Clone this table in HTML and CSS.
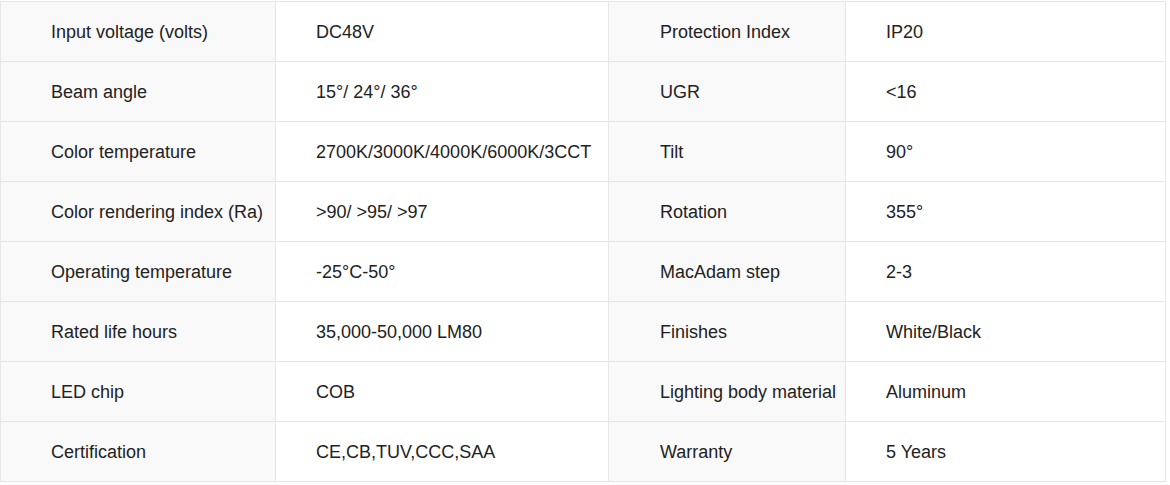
FILE: index.html
```html
<!DOCTYPE html>
<html>
<head>
<meta charset="utf-8">
<link rel="stylesheet" href="styles.css">
</head>
<body>
<div class="specs">
  <div class="cell label">Input voltage (volts)</div><div class="cell value">DC48V</div><div class="cell label alt">Protection Index</div><div class="cell value">IP20</div>
  <div class="cell label">Beam angle</div><div class="cell value">15°/ 24°/ 36°</div><div class="cell label alt">UGR</div><div class="cell value">&lt;16</div>
  <div class="cell label">Color temperature</div><div class="cell value">2700K/3000K/4000K/6000K/3CCT</div><div class="cell label alt">Tilt</div><div class="cell value">90°</div>
  <div class="cell label">Color rendering index (Ra)</div><div class="cell value">&gt;90/ &gt;95/ &gt;97</div><div class="cell label alt">Rotation</div><div class="cell value">355°</div>
  <div class="cell label">Operating temperature</div><div class="cell value">-25°C-50°</div><div class="cell label alt">MacAdam step</div><div class="cell value">2-3</div>
  <div class="cell label">Rated life hours</div><div class="cell value">35,000-50,000 LM80</div><div class="cell label alt">Finishes</div><div class="cell value">White/Black</div>
  <div class="cell label">LED chip</div><div class="cell value">COB</div><div class="cell label alt">Lighting body material</div><div class="cell value">Aluminum</div>
  <div class="cell label">Certification</div><div class="cell value">CE,CB,TUV,CCC,SAA</div><div class="cell label alt">Warranty</div><div class="cell value">5 Years</div>
</div>
</body>
</html>
```
FILE: styles.css
```css
html, body {
  margin: 0;
  padding: 0;
  background: #ffffff;
}
body {
  padding-top: 1px;
  font-family: "Liberation Sans", Arial, sans-serif;
  font-size: 18px;
  color: #222222;
}
.specs {
  display: grid;
  grid-template-columns: 275px 333px 237px 320px;
  grid-auto-rows: 60px;
  width: 1165px;
  border-top: 1px solid #e6e6e6;
  border-left: 1px solid #e6e6e6;
}
.cell {
  display: flex;
  align-items: center;
  padding-top: 1px;
  border-right: 1px solid #e6e6e6;
  border-bottom: 1px solid #e6e6e6;
  white-space: nowrap;
}
.label {
  background: #f9f9f9;
  padding-left: 50px;
}
.label.alt {
  padding-left: 51px;
}
.value {
  background: #ffffff;
  padding-left: 40px;
}
```
